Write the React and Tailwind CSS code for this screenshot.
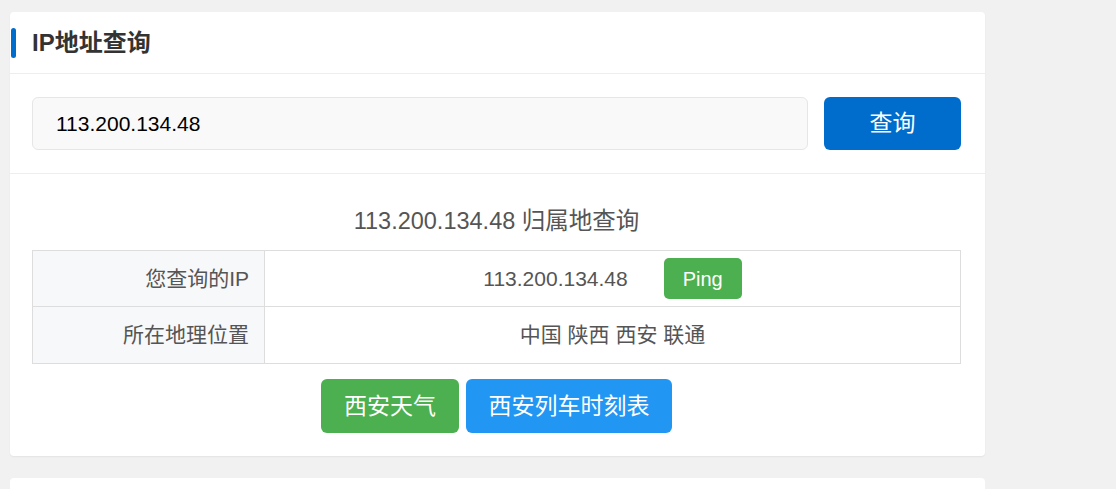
import React from "react";

const font = { fontFamily: '"Liberation Sans", "Noto Sans CJK SC", sans-serif' };

function InfoRow({ label, children, last }) {
  return (
    <div className={`flex h-[56px] ${last ? "" : "border-b border-[#dddddd]"}`}>
      <div className="w-[232px] shrink-0 bg-[#f7f8fa] border-r border-[#dddddd] flex items-center justify-end pr-[15px] text-[21px] text-[#555]">
        {label}
      </div>
      <div className="flex-1 flex items-center justify-center text-[21px] text-[#555]">
        {children}
      </div>
    </div>
  );
}

export default function App() {
  const ip = "113.200.134.48";

  return (
    <div className="min-h-screen bg-[#f1f1f1] pt-[12px] pl-[10px]" style={font}>
      <div className="w-[975px] bg-white rounded-[4px] shadow-[0_1px_2px_rgba(0,0,0,0.06)]">
        <div className="h-[62px] border-b border-[#eeeeee] flex items-center">
          <span className="ml-[1px] w-[5px] h-[30px] rounded-[3px] bg-[#006dcc]"></span>
          <h2 className="ml-[16px] text-[24px] font-bold text-[#333]">IP地址查询</h2>
        </div>

        <div className="h-[100px] border-b border-[#eeeeee] flex items-center pl-[22px] pr-[24px] gap-[16px]">
          <input
            defaultValue={ip}
            className="flex-1 h-[53px] bg-[#f9f9f9] border border-[#e6e6e6] rounded-[6px] px-[23px] text-[21px] text-black outline-none"
            style={font}
          />
          <button className="w-[137px] h-[53px] bg-[#006dcc] rounded-[6px] text-white text-[23px]">
            查询
          </button>
        </div>

        <div className="pl-[22px] pr-[24px] pt-[32px] pb-[23px]">
          <h3 className="text-center text-[23.5px] text-[#555] leading-[30px] mb-[14px]">
            {ip} 归属地查询
          </h3>
          <div className="border border-[#dddddd]">
            <InfoRow label="您查询的IP">
              <span>{ip}</span>
              <button className="ml-[36px] w-[78px] h-[41px] bg-[#4caf50] rounded-[5px] text-white text-[20px]">
                Ping
              </button>
            </InfoRow>
            <InfoRow label="所在地理位置" last>
              中国 陕西 西安 联通
            </InfoRow>
          </div>
          <div className="flex justify-center gap-[7px] mt-[15px]">
            <button className="w-[138px] h-[54px] bg-[#4caf50] rounded-[6px] text-white text-[23px]">
              西安天气
            </button>
            <button className="w-[206px] h-[54px] bg-[#2196f3] rounded-[6px] text-white text-[23px]">
              西安列车时刻表
            </button>
          </div>
        </div>
      </div>
      <div className="w-[975px] h-[40px] mt-[22px] bg-white rounded-[4px]"></div>
    </div>
  );
}
